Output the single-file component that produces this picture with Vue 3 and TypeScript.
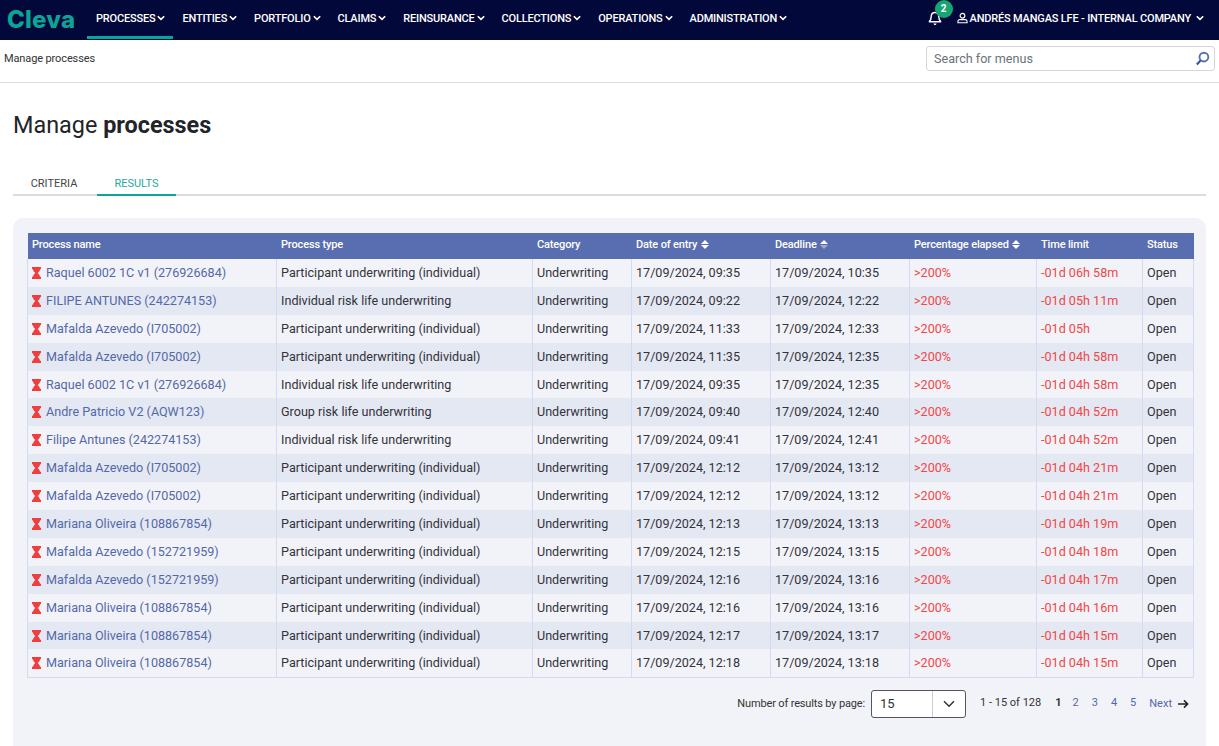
<script setup lang="ts">
const navItems = ['PROCESSES', 'ENTITIES', 'PORTFOLIO', 'CLAIMS', 'REINSURANCE', 'COLLECTIONS', 'OPERATIONS', 'ADMINISTRATION']

interface Row {
  name: string
  type: string
  entry: string
  deadline: string
  limit: string
}

const partInd = 'Participant underwriting (individual)'
const indRisk = 'Individual risk life underwriting'
const groupRisk = 'Group risk life underwriting'

const rows: Row[] = [
  { name: 'Raquel 6002 1C v1 (276926684)', type: partInd, entry: '09:35', deadline: '10:35', limit: '-01d 06h 58m' },
  { name: 'FILIPE ANTUNES (242274153)', type: indRisk, entry: '09:22', deadline: '12:22', limit: '-01d 05h 11m' },
  { name: 'Mafalda Azevedo (I705002)', type: partInd, entry: '11:33', deadline: '12:33', limit: '-01d 05h' },
  { name: 'Mafalda Azevedo (I705002)', type: partInd, entry: '11:35', deadline: '12:35', limit: '-01d 04h 58m' },
  { name: 'Raquel 6002 1C v1 (276926684)', type: indRisk, entry: '09:35', deadline: '12:35', limit: '-01d 04h 58m' },
  { name: 'Andre Patricio V2 (AQW123)', type: groupRisk, entry: '09:40', deadline: '12:40', limit: '-01d 04h 52m' },
  { name: 'Filipe Antunes (242274153)', type: indRisk, entry: '09:41', deadline: '12:41', limit: '-01d 04h 52m' },
  { name: 'Mafalda Azevedo (I705002)', type: partInd, entry: '12:12', deadline: '13:12', limit: '-01d 04h 21m' },
  { name: 'Mafalda Azevedo (I705002)', type: partInd, entry: '12:12', deadline: '13:12', limit: '-01d 04h 21m' },
  { name: 'Mariana Oliveira (108867854)', type: partInd, entry: '12:13', deadline: '13:13', limit: '-01d 04h 19m' },
  { name: 'Mafalda Azevedo (152721959)', type: partInd, entry: '12:15', deadline: '13:15', limit: '-01d 04h 18m' },
  { name: 'Mafalda Azevedo (152721959)', type: partInd, entry: '12:16', deadline: '13:16', limit: '-01d 04h 17m' },
  { name: 'Mariana Oliveira (108867854)', type: partInd, entry: '12:16', deadline: '13:16', limit: '-01d 04h 16m' },
  { name: 'Mariana Oliveira (108867854)', type: partInd, entry: '12:17', deadline: '13:17', limit: '-01d 04h 15m' },
  { name: 'Mariana Oliveira (108867854)', type: partInd, entry: '12:18', deadline: '13:18', limit: '-01d 04h 15m' },
]

const pages = [2, 3, 4, 5]
</script>

<template>
  <div class="page">
    <header class="topbar">
      <div class="logo">Cleva</div>
      <nav class="nav">
        <a v-for="(item, i) in navItems" :key="item" class="nav-item" :class="{ active: i === 0 }">
          {{ item }}
          <svg class="chev" viewBox="0 0 10 7" width="8" height="6"><path d="M1 1.300l4 4 4-4" fill="none" stroke="#fff" stroke-width="2" /></svg>
        </a>
      </nav>
      <div class="user-area">
        <span class="bell">
          <svg viewBox="0 0 14 15" width="14" height="15"><path d="M7 1.500c-2.600 0-3.800 2-3.800 4.200 0 2.800-1 3.900-1.900 5h11.400c-.9-1.100-1.900-2.200-1.900-5C10.800 3.500 9.600 1.500 7 1.500z" fill="none" stroke="#fff" stroke-width="1.400" stroke-linejoin="round" /><path d="M5.500 12.600c.2 1 .8 1.500 1.500 1.500s1.300-.5 1.500-1.500z" fill="#fff" /></svg>
          <span class="badge">2</span>
        </span>
        <svg class="user-icon" viewBox="0 0 12 12" width="11" height="12"><circle cx="6" cy="3.500" r="2.600" fill="none" stroke="#fff" stroke-width="1.200" /><path d="M1 11.200V9.800C1 8.600 2 7.800 3 7.800h6c1 0 2 .8 2 2v1.400z" fill="none" stroke="#fff" stroke-width="1.200" /></svg>
        <span class="user-name">ANDRÉS MANGAS LFE - INTERNAL COMPANY</span>
        <svg class="chev" viewBox="0 0 10 7" width="8" height="6"><path d="M1 1.300l4 4 4-4" fill="none" stroke="#fff" stroke-width="2" /></svg>
      </div>
    </header>

    <div class="crumbbar">
      <span class="crumb">Manage processes</span>
      <div class="search">
        <span class="search-text">Search for menus</span>
        <svg viewBox="0 0 16 16" width="15" height="15"><circle cx="9.500" cy="6.500" r="4.700" fill="none" stroke="#5a6fb0" stroke-width="2" /><path d="M6 10l-4 4.500" stroke="#3f5296" stroke-width="2.400" /></svg>
      </div>
    </div>

    <main class="content">
      <h1 class="title">Manage <b>processes</b></h1>

      <div class="tabs">
        <span class="tab">CRITERIA</span>
        <span class="tab tab-active">RESULTS</span>
      </div>

      <section class="panel">
        <table class="grid">
          <colgroup>
            <col style="width: 249px" />
            <col style="width: 256px" />
            <col style="width: 99px" />
            <col style="width: 139px" />
            <col style="width: 139px" />
            <col style="width: 127px" />
            <col style="width: 106px" />
            <col style="width: 51px" />
          </colgroup>
          <thead>
            <tr>
              <th>Process name</th>
              <th>Process type</th>
              <th>Category</th>
              <th>Date of entry <span class="sort"><i class="up" /><i class="down" /></span></th>
              <th>Deadline <span class="sort"><i class="up" /><i class="down dim" /></span></th>
              <th>Percentage elapsed <span class="sort"><i class="up" /><i class="down" /></span></th>
              <th>Time limit</th>
              <th>Status</th>
            </tr>
          </thead>
          <tbody>
            <tr v-for="(row, i) in rows" :key="i">
              <td class="name-cell">
                <svg class="hourglass" viewBox="0 0 9 12" width="9" height="12"><path d="M0 0h9v2.200H8c0 1.700-1.300 2.800-2.300 3.800 1 1 2.300 2.100 2.300 3.800h1V12H0V9.800h1C1 8.100 2.300 7 3.300 6 2.300 5 1 3.900 1 2.200H0z" fill="#f03e3e" /></svg>
                <a class="name-link">{{ row.name }}</a>
              </td>
              <td>{{ row.type }}</td>
              <td>Underwriting</td>
              <td>17/09/2024, {{ row.entry }}</td>
              <td>17/09/2024, {{ row.deadline }}</td>
              <td class="late">&gt;200%</td>
              <td class="late">{{ row.limit }}</td>
              <td>Open</td>
            </tr>
          </tbody>
        </table>

        <div class="pager">
          <span class="pager-label">Number of results by page:</span>
          <div class="page-size">
            <span class="page-size-value">15</span>
            <span class="page-size-arrow">
              <svg viewBox="0 0 12 8" width="12" height="8"><path d="M1 1.200l5 5 5-5" fill="none" stroke="#333" stroke-width="1.500" /></svg>
            </span>
          </div>
          <span class="pager-count">1 - 15 of 128</span>
          <b class="page-current">1</b>
          <a v-for="p in pages" :key="p" class="page-link">{{ p }}</a>
          <a class="page-next">Next</a>
          <svg viewBox="0 0 12 10" width="11" height="10"><path d="M0 5h10M6.500 1l4 4-4 4" fill="none" stroke="#222" stroke-width="1.700" /></svg>
        </div>
      </section>
    </main>
  </div>
</template>

<style scoped>
.page {
  height: 746px;
  overflow: hidden;
  font-family: Roboto, "Liberation Sans", sans-serif;
  color: #212529;
  background: #fff;
}

.topbar {
  display: flex;
  align-items: stretch;
  height: 40px;
  background: #02083a;
  color: #fff;
}

.logo {
  width: 84px;
  padding-left: 7px;
  font-family: Inter, Roboto, sans-serif;
  font-size: 24px;
  font-weight: 800;
  letter-spacing: 0.2px;
  line-height: 39px;
  color: #0aa596;
  flex: none;
  box-sizing: border-box;
}

.nav {
  display: flex;
  margin-left: 3px;
}

.nav-item {
  display: flex;
  align-items: center;
  gap: 2px;
  height: 39px;
  padding: 0 8px 3px 9px;
  box-sizing: border-box;
  font-size: 11px;
  font-weight: 500;
  letter-spacing: -0.19px;
  white-space: nowrap;
}

.nav-item.active {
  border-bottom: 3px solid #0aa596;
  padding-bottom: 0;
}

.user-area {
  display: flex;
  align-items: center;
  margin-left: auto;
  padding: 0 15px 4px 0;
}

.bell {
  position: relative;
  display: flex;
  margin-right: 15px;
}

.badge {
  position: absolute;
  top: -11px;
  left: 7px;
  width: 18px;
  height: 18px;
  border-radius: 50%;
  background: #17a673;
  font-size: 10px;
  font-weight: 700;
  line-height: 17px;
  text-align: center;
}

.user-name {
  margin: 0 5px 0 2px;
  font-size: 11px;
  font-weight: 500;
  letter-spacing: -0.18px;
  white-space: nowrap;
}

.crumbbar {
  display: flex;
  align-items: center;
  justify-content: space-between;
  height: 37px;
  padding: 0 4px 5px;
  border-bottom: 1px solid #dcdce2;
}

.crumb {
  font-size: 11px;
  letter-spacing: -0.12px;
  color: #333;
}

.search {
  display: flex;
  align-items: center;
  justify-content: space-between;
  width: 289px;
  height: 25px;
  padding: 0 4px 0 7px;
  box-sizing: border-box;
  border: 1px solid #d5d5dc;
  border-radius: 3px;
}

.search-text {
  font-size: 12.6px;
  color: #6c7177;
}

.content {
  padding: 0 13px;
}

.title {
  margin: 0;
  padding-top: 27px;
  font-size: 23.4px;
  font-weight: 400;
  line-height: 30px;
  color: #212529;
}

.title b {
  font-weight: 700;
}

.tabs {
  display: flex;
  height: 23px;
  box-sizing: border-box;
  margin-top: 33px;
  border-bottom: 2px solid #dcdcdc;
}

.tab {
  width: 84px;
  height: 23px;
  box-sizing: border-box;
  font-size: 11px;
  line-height: 22px;
  text-align: center;
  color: #444;
}

.tab:first-child {
  padding-right: 2px;
}

.tab-active {
  width: 79px;
  border-bottom: 2px solid #0aa596;
  color: #2aa79b;
}

.panel {
  margin-top: 22px;
  height: 528px;
  padding: 15px 13px 0 14px;
  box-sizing: border-box;
  border-radius: 10px 10px 0 0;
  background: #f2f3f9;
}

.grid {
  width: 1166px;
  table-layout: fixed;
  border-collapse: collapse;
  font-size: 12.6px;
}

.grid th {
  height: 26px;
  padding: 0 4.5px 4px;
  box-sizing: border-box;
  background: #586eb1;
  color: #fff;
  font-size: 11px;
  font-weight: 500;
  letter-spacing: -0.15px;
  text-align: left;
  white-space: nowrap;
  border: 0;
}

.grid td {
  height: 27.9px;
  padding: 0 4px 1px;
  box-sizing: border-box;
  border: 1px solid #d5daf3;
  border-top: 0;
  border-bottom: 0;
  white-space: nowrap;
  color: #33333b;
}

.grid tbody tr:nth-child(even) td {
  background: #e4e8f3;
}

.grid tbody tr:last-child td {
  border-bottom: 1px solid #d5daf3;
}

.name-cell {
  overflow: hidden;
}

.hourglass {
  margin-right: 5px;
  vertical-align: -2px;
}

.name-link {
  color: #5468a8;
}

.grid td.late {
  color: #f04747;
}

.sort {
  display: inline-flex;
  flex-direction: column;
  gap: 1px;
  margin-left: 1px;
  vertical-align: middle;
}

.sort i {
  display: block;
  width: 0;
  height: 0;
  border-left: 4px solid transparent;
  border-right: 4px solid transparent;
}

.sort .up {
  border-bottom: 4px solid #fff;
}

.sort .down {
  border-top: 4px solid #fff;
}

.sort .dim {
  border-top-color: #9daad4;
}

.pager {
  display: flex;
  align-items: center;
  justify-content: flex-end;
  height: 28px;
  margin-top: 12px;
  padding-right: 4px;
  font-size: 11px;
  color: #333;
}

.pager-label {
  letter-spacing: -0.15px;
}

.page-size {
  display: flex;
  width: 95px;
  height: 28px;
  margin: 0 14px 0 6px;
  box-sizing: border-box;
  border: 1px solid #55555f;
  border-radius: 3px;
  background: #fff;
}

.page-size-value {
  flex: 1;
  padding-left: 8px;
  font-size: 13px;
  line-height: 26px;
}

.page-size-arrow {
  display: flex;
  align-items: center;
  justify-content: center;
  width: 32px;
  border-left: 1px solid #ccc;
}

.pager-count {
  margin-right: 14px;
  margin-top: -2px;
}

.page-current {
  margin-right: 11px;
  margin-top: -2px;
}

.page-link {
  margin-right: 13px;
  margin-top: -2px;
  color: #5468a8;
}

.page-next {
  margin-right: 6px;
  color: #5468a8;
}
</style>

<style>
html,
body {
  margin: 0;
  overflow: hidden;
}
</style>
